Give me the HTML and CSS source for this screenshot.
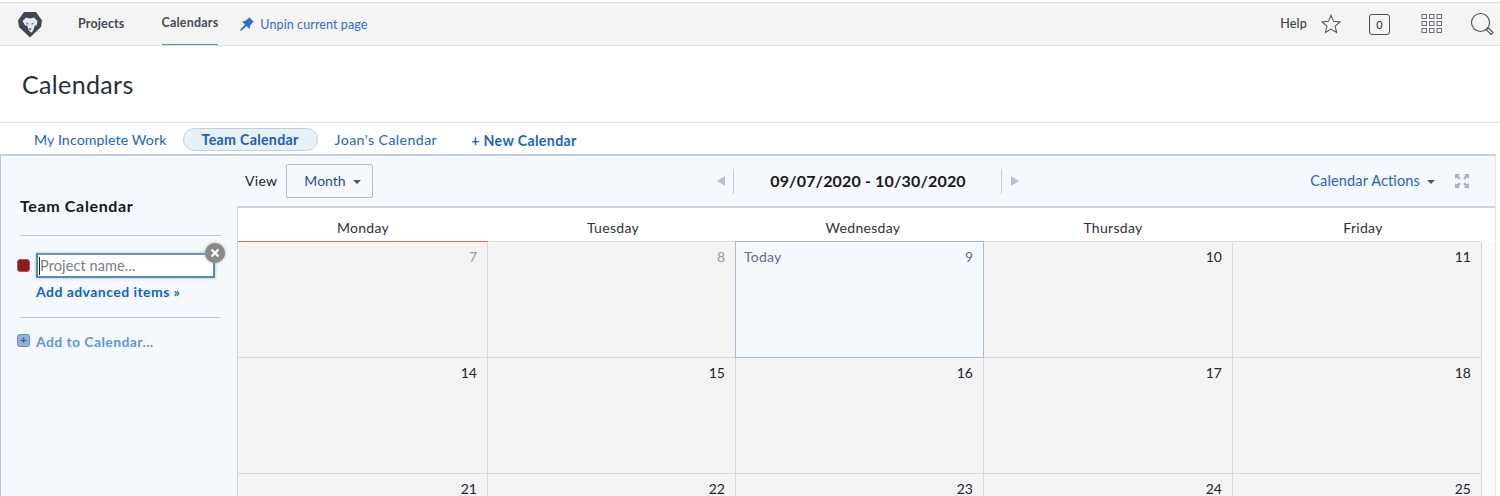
FILE: index.html
```html
<!DOCTYPE html>
<html lang="en">
<head>
<meta charset="utf-8">
<title>Calendars</title>
<link rel="stylesheet" href="styles.css">
</head>
<body>
<header class="topbar">
  <svg class="logo" width="26" height="27" viewBox="0 0 26 27">
    <path class="logo-bg" d="M7 1h12l6 8.500-1 6.500-11 10.500L2 16 1 9.500z"/>
    <path class="logo-face" d="M5.500 10 9 6.500l4 1 4-1 3.500 3.500-1 5-1.500-1-1.500 5-2 2.500h-1l-2-2.500-1.500-5-1.500 1z"/>
    <path class="logo-bg" d="M8.500 11.500l3.200 1.300-.7 1zM17.500 11.500l-3.200 1.300.7 1zM11.500 17.500h3L13 19.500z"/>
  </svg>
  <a class="nav-link nav-projects">Projects</a>
  <a class="nav-link nav-active">Calendars</a>
  <a class="unpin">
    <svg width="16" height="16" viewBox="0 0 16 16"><path class="pin" d="M10 1l5 5-1.500.5L11 10l-.5 3-3-3-5.500 5-1-1 5-5.500-3-3 3-.5 3.500-2.500z"/></svg>
    <span>Unpin current page</span>
  </a>
  <div class="spacer"></div>
  <span class="help">Help</span>
  <svg class="i-star" width="22" height="22" viewBox="0 0 24 24"><path d="M12 2.500l2.800 6.600 7 .6-5.300 4.600 1.600 6.900-6.100-3.700-6.100 3.700 1.600-6.900L2.200 9.700l7-.6z"/></svg>
  <span class="count">0</span>
  <svg class="i-grid" width="22" height="22" viewBox="0 0 22 22">
    <rect x="1" y="1.500" width="4.500" height="4"/><rect x="8.500" y="1.500" width="4.500" height="4"/><rect x="16" y="1.500" width="4.500" height="4"/>
    <rect x="1" y="8.500" width="4.500" height="4"/><rect x="8.500" y="8.500" width="4.500" height="4"/><rect x="16" y="8.500" width="4.500" height="4"/>
    <rect x="1" y="15.500" width="4.500" height="4"/><rect x="8.500" y="15.500" width="4.500" height="4"/><rect x="16" y="15.500" width="4.500" height="4"/>
  </svg>
  <svg class="i-search" width="24" height="24" viewBox="0 0 24 24"><circle cx="10.500" cy="10.500" r="9"/><path d="M17 17l1.500-1 4.500 4.500-2 2-4.500-4.500z"/></svg>
</header>

<h1 class="title">Calendars</h1>

<nav class="tabs">
  <a class="tab">My Incomplete Work</a>
  <a class="tab tab-active">Team Calendar</a>
  <a class="tab tab-joan">Joan's Calendar</a>
  <a class="tab-new">+ New Calendar</a>
</nav>

<div class="workspace">
  <aside class="sidebar">
    <h2 class="side-title">Team Calendar</h2>
    <div class="side-block">
      <div class="input-row">
        <span class="swatch"></span>
        <div class="input-wrap">
          <span class="fake-input"><span class="caret"></span>Project name...</span>
          <span class="close">
            <svg width="10" height="10" viewBox="0 0 10 10"><path d="M1.500 1.500l7 7M8.500 1.500l-7 7"/></svg>
          </span>
        </div>
      </div>
      <a class="advanced">Add advanced items »</a>
    </div>
    <div class="side-add">
      <span class="plus-box">+</span>
      <a class="add-link">Add to Calendar...</a>
    </div>
  </aside>

  <main class="main">
    <div class="toolbar">
      <div class="view">
        <span class="view-label">View</span>
        <span class="view-btn">Month<i class="caret-down"></i></span>
      </div>
      <div class="range">
        <i class="tri tri-left"></i><i class="sep"></i>
        <span class="range-text">09/07/2020 - 10/30/2020</span>
        <i class="sep"></i><i class="tri tri-right"></i>
      </div>
      <div class="actions">
        <span class="actions-link">Calendar Actions<i class="caret-down"></i></span>
        <svg class="expand" width="16" height="16" viewBox="0 0 16 16"><path d="M1 1h5L4.500 2.800l2.300 2.300-1.700 1.700-2.300-2.300L1 6zM15 1v5l-1.800-1.500-2.300 2.300-1.700-1.700 2.300-2.300L10 1zM1 15v-5l1.800 1.500 2.300-2.300 1.700 1.700-2.300 2.300L6 15zM15 15h-5l1.500-1.800-2.300-2.300 1.700-1.700 2.300 2.300L15 10z"/></svg>
      </div>
    </div>

    <div class="cal-wrap">
      <div class="dow-row">
        <div class="dow dow-mon">Monday</div>
        <div class="dow">Tuesday</div>
        <div class="dow">Wednesday</div>
        <div class="dow">Thursday</div>
        <div class="dow dow-fri">Friday</div>
      </div>
      <div class="cal-body">
        <div class="calendar">
          <div class="cell past">7</div>
          <div class="cell past">8</div>
          <div class="cell today"><span class="today-label">Today</span><span>9</span></div>
          <div class="cell">10</div>
          <div class="cell">11</div>

          <div class="cell">14</div>
          <div class="cell">15</div>
          <div class="cell">16</div>
          <div class="cell">17</div>
          <div class="cell">18</div>

          <div class="cell">21</div>
          <div class="cell">22</div>
          <div class="cell">23</div>
          <div class="cell">24</div>
          <div class="cell">25</div>
        </div>
        <div class="gutter"></div>
      </div>
    </div>
  </main>
</div>
</body>
</html>
```
FILE: styles.css
```css
* { box-sizing: border-box; }
html, body { margin: 0; height: 496px; overflow: hidden; }
body { background: #fff; color: #2a2f3a; font-family: Lato, "Open Sans", sans-serif; font-size: 14px; }
a { color: inherit; text-decoration: none; }
i { display: block; font-style: normal; }

.topbar {
  display: flex; align-items: center; height: 44px; margin-top: 2px;
  background: #f4f4f4; border-top: 1px solid #dedede; border-bottom: 1px solid #dfdfdf;
  padding-left: 17px; padding-right: 6px;
}
.logo { flex: none; margin-top: 1px; }
.logo-bg { fill: #3f4654; }
.logo-face { fill: #e8e9eb; }
.nav-link { display: flex; align-items: center; height: 42px; font-size: 12.500px; font-weight: 700; color: #454a54; letter-spacing: .15px; padding-bottom: 2px; }
.nav-projects { margin-left: 35px; }
.nav-active { margin-left: 37px; border-bottom: 1px solid #5b8ee0; letter-spacing: .2px; }
.unpin { display: flex; align-items: center; margin-left: 21px; gap: 5px; color: #2a6fd0; font-size: 12.500px; letter-spacing: .1px; }
.pin { fill: #2a6fd0; }
.spacer { flex: 1; }
.help { font-size: 12.500px; color: #3a3f49; font-weight: 500; letter-spacing: .2px; margin-right: 13px; padding-bottom: 1px; }
.i-star { fill: none; stroke: #4a4f59; stroke-width: 1.100; margin-right: 27px; }
.count { width: 21px; height: 21px; border: 1px solid #4a4f59; border-radius: 3px; font-size: 11px; display: flex; align-items: center; justify-content: center; margin-right: 31px; margin-top: 1px; }
.i-grid { fill: none; stroke: #6a6e76; stroke-width: 1; margin-right: 27px; }
.i-search { fill: none; stroke: #4a4f59; stroke-width: 1.100; }

.title { margin: 0; height: 77px; padding: 22px 0 0 22px; font-size: 25px; line-height: 32px; font-weight: 400; color: #2a2f3a; letter-spacing: .35px; border-bottom: 1px solid #e2e2e2; }

.tabs { display: flex; align-items: center; height: 31px; padding-left: 34px; padding-top: 1px; font-size: 14.200px; color: #1c64c4; }
.tab { letter-spacing: .1px; }
.tab-active { margin-left: 16px; width: 135px; height: 23px; border: 1px solid #c0d0e2; border-radius: 12px; background: #e8f0f8; font-weight: 700; display: flex; align-items: center; justify-content: center; color: #1c5fb8; letter-spacing: .3px; }
.tab-joan { margin-left: 17px; letter-spacing: .4px; }
.tab-new { margin-left: 34px; font-weight: 700; padding-top: 3px; letter-spacing: .35px; }

.workspace { display: flex; height: 342px; margin-right: 4px; overflow: hidden; background: #f5f8fd; border-top: 2px solid #c5d0dc; border-left: 1px solid #b7c8dc; border-right: 1px solid #e6e6e6; }
.sidebar { width: 236px; flex: none; padding: 40px 16px 0 16px; }
.side-title { margin: 0 0 0 3px; font-size: 16px; line-height: 20px; font-weight: 700; color: #14171c; letter-spacing: .65px; height: 40px; border-bottom: 1px solid #bcc8d6; }
.side-block { padding-top: 17px; height: 82px; border-bottom: 1px solid #bcc8d6; margin-left: 3px; }
.input-row { display: flex; align-items: center; margin-left: -3px; margin-bottom: 5px; }
.swatch { width: 13px; height: 13px; background: #8e1c1c; border: 1px solid #a65a5a; border-radius: 3px; margin-right: 6px; flex: none; }
.input-wrap { position: relative; }
.fake-input { display: flex; align-items: center; width: 179px; height: 25px; background: #fff; border: 2px solid #5f86ac; border-top-color: #6f92b4; box-shadow: 0 0 3px #9cb8d6; font-size: 14.500px; color: #7a7d82; padding-left: 1px; letter-spacing: .1px; }
.caret { width: 1px; height: 18px; background: #222; }
.close { position: absolute; top: -10px; right: -10px; width: 20px; height: 20px; border-radius: 50%; background: #8a8a8a; box-shadow: 0 0 3px #9aa; display: flex; align-items: center; justify-content: center; }
.close path { stroke: #fff; stroke-width: 2.200; fill: none; }
.advanced { display: block; margin-left: 16px; color: #0e63c9; font-weight: 700; font-size: 14px; letter-spacing: .45px; }
.side-add { display: flex; align-items: center; padding-top: 15px; }
.plus-box { width: 13px; height: 13px; background: #8fb2d8; border: 1px solid #6d8cae; border-radius: 3px; color: #2d5a8e; font-size: 12px; line-height: 10px; text-align: center; font-weight: 700; margin-right: 6px; margin-top: -2px; }
.add-link { color: #5b9ade; font-weight: 700; font-size: 14px; letter-spacing: .4px; }

.main { flex: 1; min-width: 0; display: flex; flex-direction: column; }
.toolbar { display: flex; flex: none; align-items: center; height: 50px; padding-right: 25px; }
.view { display: flex; align-items: center; padding-left: 8px; width: 400px; }
.view-label { font-size: 14px; color: #1b1f27; letter-spacing: .3px; padding-bottom: 1px; }
.view-btn { display: flex; align-items: center; margin-left: 9px; width: 87px; height: 34px; padding: 0 0 1px 17px; border: 1px solid #b4bcc6; border-radius: 2px; font-size: 14px; color: #1f4f91; }
.caret-down { width: 0; height: 0; border-left: 4px solid transparent; border-right: 4px solid transparent; border-top: 4px solid #555; margin-left: 7px; margin-top: 2px; }
.range { display: flex; align-items: center; margin-left: 80px; }
.tri { width: 0; height: 0; border-top: 5px solid transparent; border-bottom: 5px solid transparent; }
.tri-left { border-right: 8px solid #b3c3d6; }
.tri-right { border-left: 8px solid #b3c3d6; }
.sep { width: 1px; height: 25px; background: #c3cfdb; margin: 0 9px 0 8px; }
.range .sep:last-of-type { margin: 0 5px 0 10px; }
.range-text { width: 252px; text-align: center; font-size: 16px; font-weight: 700; color: #14171c; letter-spacing: .15px; margin-left: -2px; padding: 0 0 1px 2px; }
.actions { margin-left: auto; display: flex; align-items: center; }
.actions-link { display: flex; align-items: center; font-size: 14.500px; color: #1c64c4; letter-spacing: .15px; padding-bottom: 1px; }
.expand { fill: #a0b4c9; margin-left: 19px; }

.cal-wrap { flex: none; background: #fff; border-top: 2px solid #c9d5e1; border-left: 1px solid #c9d5e1; }
.dow-row { display: grid; grid-template-columns: repeat(5, 250px); height: 34px; }
.dow { text-align: center; font-size: 14px; line-height: 39px; color: #2f333b; letter-spacing: .3px; height: 34px; border-bottom: 1px solid #dcdcdc; }
.dow-mon { border-bottom-color: #cf7d55; }
.dow-fri { border-bottom: 0; background: linear-gradient(#dcdcdc, #dcdcdc) 0 100% / 243px 1px no-repeat; }
.cal-body { display: flex; }
.calendar { width: 1244px; flex: none; display: grid; grid-template-columns: 250px 248px 248px 249px 249px; grid-template-rows: 116px 116px 40px; background: #f4f4f4; }
.cell { display: flex; justify-content: flex-end; padding: 8px 10px 0 8px; font-size: 14px; line-height: 14px; color: #22262d; border-right: 1px solid #d8d8d8; border-bottom: 1px solid #d8d8d8; }
.cell.past { color: #9a9a9a; }
.today { justify-content: space-between; background: #f4f9fd; color: #5f6f86; border: 1px solid #a8bdd2; margin-left: -1px; margin-top: -1px; }
.today-label { letter-spacing: .2px; }
.gutter { flex: 1; background: #fafafa; }
```
